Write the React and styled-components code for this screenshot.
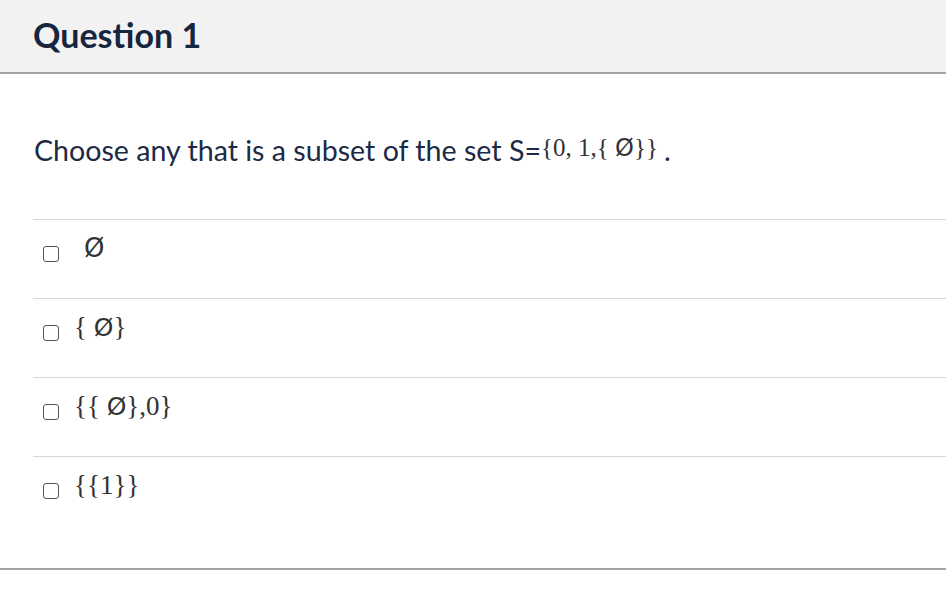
import React from "react";
import styled, { createGlobalStyle } from "styled-components";

const Global = createGlobalStyle`
  html, body { margin: 0; padding: 0; background: #fff; }
  body { font-family: Lato, "Noto Sans", sans-serif; }
`;

const Page = styled.div`
  width: 946px;
  height: 590px;
  background: #fff;
  display: flex;
  flex-direction: column;
`;

const Header = styled.div`
  height: 74px;
  background: #f2f2f2;
  border-bottom: 2px solid #a3a3a3;
  display: flex;
  align-items: center;
  padding: 0 0 4px 33px;
  box-sizing: border-box;
`;

const Title = styled.h2`
  margin: 0;
  font-family: Lato, sans-serif;
  font-weight: 700;
  font-size: 34px;
  color: #17263f;
`;

const Body = styled.div`
  padding: 0 0 33px 33px;
  border-bottom: 2px solid #a3a3a3;
`;

const Prompt = styled.p`
  margin: 0;
  padding: 56px 0 0 1px;
  height: 145px;
  box-sizing: border-box;
  font-family: Lato, sans-serif;
  font-size: 28.6px;
  color: #1c2a45;
  line-height: 40px;
`;

const MathSpan = styled.span`
  font-family: "Liberation Serif", "DejaVu Serif", serif;
  color: #333;
  font-size: 25px;
  position: relative;
  top: -5px;
  margin-right: 6px;
`;

const List = styled.div`
  display: flex;
  flex-direction: column;
`;

const Row = styled.label`
  height: 79px;
  border-top: 1px solid #d7d7d7;
  display: flex;
  align-items: flex-start;
  box-sizing: border-box;
  padding: 14px 0 0 10px;
  gap: 15px;
`;

const Box = styled.span`
  width: 14px;
  height: 14px;
  border: 1.5px solid #555;
  border-radius: 3px;
  margin-top: 12px;
  flex: none;
  box-sizing: content-box;
`;

const OptText = styled.span`
  font-family: "Liberation Serif", "DejaVu Serif", serif;
  font-size: 27px;
  color: #333;
  line-height: 28px;
`;

const Empty = styled.span`
  font-family: "DejaVu Sans", sans-serif;
  font-size: ${(p) => p.size || 25}px;
`;

const E = ({ size }) => <Empty size={size}>Ø</Empty>;

const options = [
  { key: "a", node: <span style={{ marginLeft: 10 }}><E size={26} /></span> },
  { key: "b", node: <>{"{ "}<E />{"}"}</> },
  { key: "c", node: <>{"{{ "}<E />{"},0}"}</> },
  { key: "d", node: <>{"{{1}}"}</> },
];

export default function App() {
  return (
    <Page>
      <Global />
      <Header>
        <Title>Question 1</Title>
      </Header>
      <Body>
        <Prompt>
          Choose any that is a subset of the set S=
          <MathSpan>
            {"{0, 1,{ "}
            <E size={24} />
            {"}}"}
          </MathSpan>
          .
        </Prompt>
        <List>
          {options.map((o) => (
            <Row key={o.key}>
              <Box />
              <OptText>{o.node}</OptText>
            </Row>
          ))}
        </List>
      </Body>
    </Page>
  );
}
